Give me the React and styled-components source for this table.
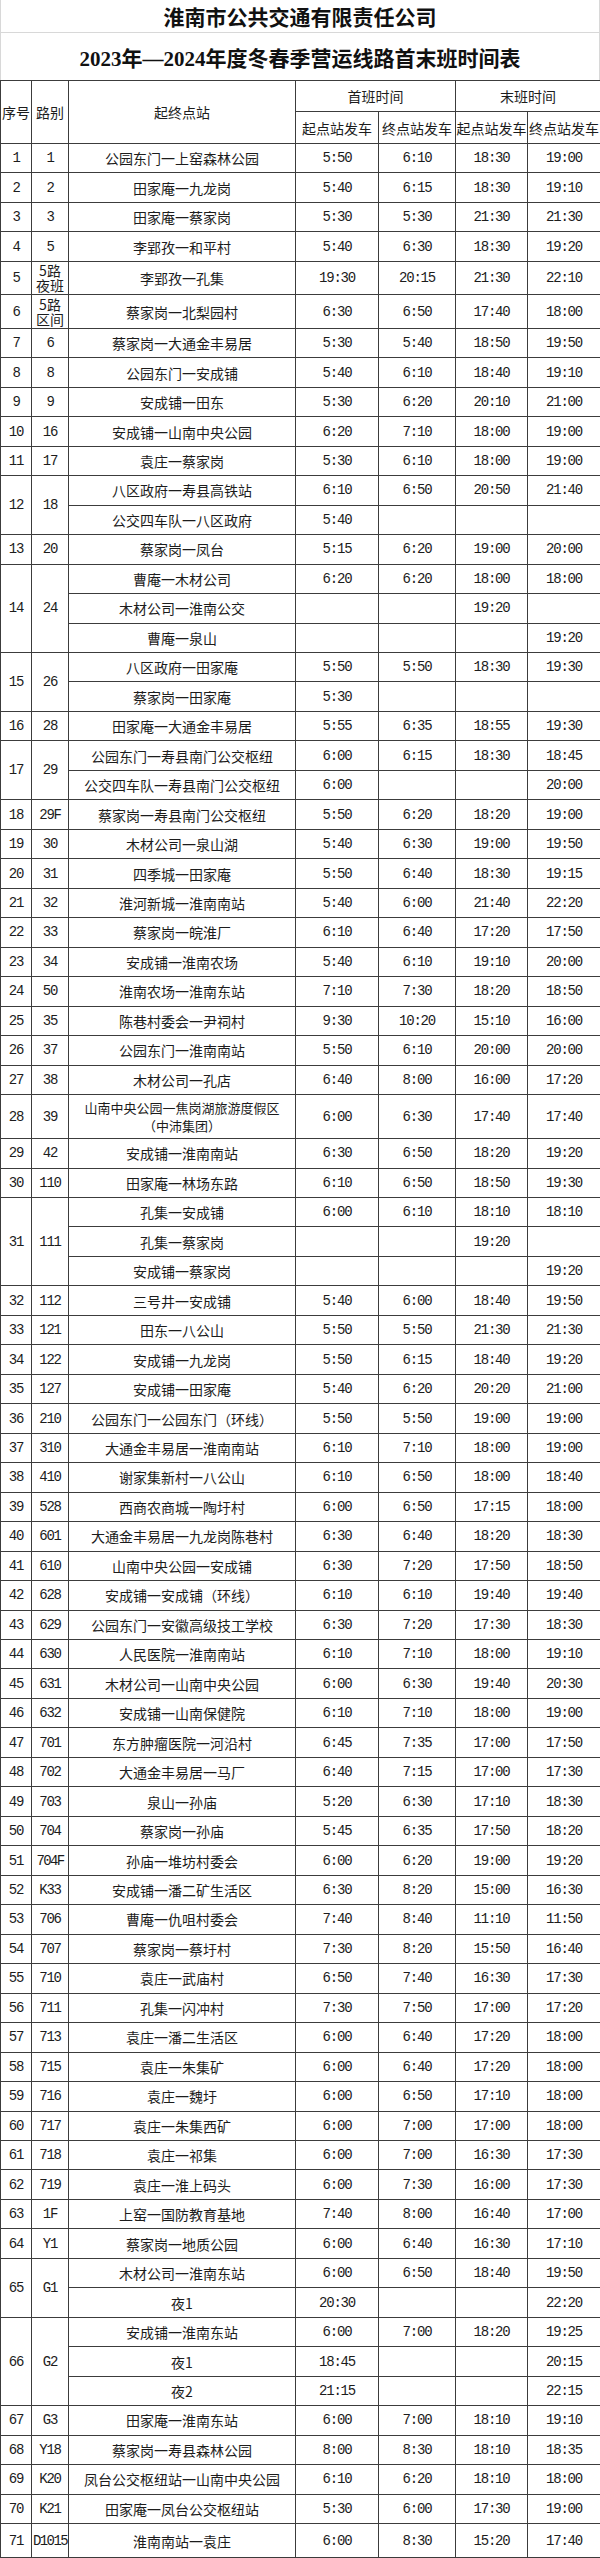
import React from "react";
import styled, { createGlobalStyle, css } from "styled-components";

const GlobalStyle = createGlobalStyle`
  body {
    margin: 0;
    background: #fff;
  }
`;

const CJK = `"Noto Sans CJK SC", sans-serif`;
const DIGITS = `"Liberation Mono", "Noto Sans CJK SC", monospace`;
const ROW_H = 29.47;

const Sheet = styled.div`
  width: 600px;
  color: #1c1c1c;
  font-family: ${CJK};
`;

const TitleBar = styled.div`
  height: ${props => props.$h}px;
  box-sizing: border-box;
  display: flex;
  align-items: center;
  justify-content: center;
  border-left: 1px solid #d8d8d8;
  border-right: 1px solid #d8d8d8;
  border-bottom: ${props => (props.$rule ? "1px solid #d8d8d8" : "none")};
  font-family: "Liberation Serif", "Noto Sans CJK SC", serif;
  font-weight: bold;
  font-size: 21px;
  color: #111;
`;

const Grid = styled.table`
  width: 600px;
  border-collapse: collapse;
  table-layout: fixed;
`;

const Row = styled.tr`
  height: ${props => props.$h}px;
`;

const cellBase = css`
  border: 1px solid #3c3c3c;
  padding: 0;
  text-align: center;
  vertical-align: middle;
  white-space: pre-line;
  overflow: hidden;
  font-weight: normal;
  font-family: ${props => (props.$digits ? DIGITS : CJK)};
  font-size: ${props => (props.$small ? 13 : 14)}px;
  letter-spacing: ${props =>
    props.$digits ? (props.$squeeze ? "-1.6px" : "-1.2px") : "0"};
  line-height: ${props => props.$lh || 18}px;
`;

const HeadCell = styled.th`
  ${cellBase};
`;

const Cell = styled.td`
  ${cellBase};
`;

const widths = [31, 37, 227, 83, 77, 72, 73];

const routes = [
  { n: 1, r: "1", subs: [["公园东门一上窑森林公园", "5:50", "6:10", "18:30", "19:00"]] },
  { n: 2, r: "2", subs: [["田家庵一九龙岗", "5:40", "6:15", "18:30", "19:10"]] },
  { n: 3, r: "3", subs: [["田家庵一蔡家岗", "5:30", "5:30", "21:30", "21:30"]] },
  { n: 4, r: "5", subs: [["李郢孜一和平村", "5:40", "6:30", "18:30", "19:20"]] },
  { n: 5, r: "5路\n夜班", h: 33.3, subs: [["李郢孜一孔集", "19:30", "20:15", "21:30", "22:10"]] },
  { n: 6, r: "5路\n区间", h: 33.7, subs: [["蔡家岗一北梨园村", "6:30", "6:50", "17:40", "18:00"]] },
  { n: 7, r: "6", subs: [["蔡家岗一大通金丰易居", "5:30", "5:40", "18:50", "19:50"]] },
  { n: 8, r: "8", subs: [["公园东门一安成铺", "5:40", "6:10", "18:40", "19:10"]] },
  { n: 9, r: "9", subs: [["安成铺一田东", "5:30", "6:20", "20:10", "21:00"]] },
  { n: 10, r: "16", subs: [["安成铺一山南中央公园", "6:20", "7:10", "18:00", "19:00"]] },
  { n: 11, r: "17", subs: [["袁庄一蔡家岗", "5:30", "6:10", "18:00", "19:00"]] },
  {
    n: 12,
    r: "18",
    subs: [
      ["八区政府一寿县高铁站", "6:10", "6:50", "20:50", "21:40"],
      ["公交四车队一八区政府", "5:40", "", "", ""]
    ]
  },
  { n: 13, r: "20", subs: [["蔡家岗一凤台", "5:15", "6:20", "19:00", "20:00"]] },
  {
    n: 14,
    r: "24",
    subs: [
      ["曹庵一木材公司", "6:20", "6:20", "18:00", "18:00"],
      ["木材公司一淮南公交", "", "", "19:20", ""],
      ["曹庵一泉山", "", "", "", "19:20"]
    ]
  },
  {
    n: 15,
    r: "26",
    subs: [
      ["八区政府一田家庵", "5:50", "5:50", "18:30", "19:30"],
      ["蔡家岗一田家庵", "5:30", "", "", ""]
    ]
  },
  { n: 16, r: "28", subs: [["田家庵一大通金丰易居", "5:55", "6:35", "18:55", "19:30"]] },
  {
    n: 17,
    r: "29",
    subs: [
      ["公园东门一寿县南门公交枢纽", "6:00", "6:15", "18:30", "18:45"],
      ["公交四车队一寿县南门公交枢纽", "6:00", "", "", "20:00"]
    ]
  },
  { n: 18, r: "29F", subs: [["蔡家岗一寿县南门公交枢纽", "5:50", "6:20", "18:20", "19:00"]] },
  { n: 19, r: "30", subs: [["木材公司一泉山湖", "5:40", "6:30", "19:00", "19:50"]] },
  { n: 20, r: "31", subs: [["四季城一田家庵", "5:50", "6:40", "18:30", "19:15"]] },
  { n: 21, r: "32", subs: [["淮河新城一淮南南站", "5:40", "6:00", "21:40", "22:20"]] },
  { n: 22, r: "33", subs: [["蔡家岗一皖淮厂", "6:10", "6:40", "17:20", "17:50"]] },
  { n: 23, r: "34", subs: [["安成铺一淮南农场", "5:40", "6:10", "19:10", "20:00"]] },
  { n: 24, r: "50", subs: [["淮南农场一淮南东站", "7:10", "7:30", "18:20", "18:50"]] },
  { n: 25, r: "35", subs: [["陈巷村委会一尹祠村", "9:30", "10:20", "15:10", "16:00"]] },
  { n: 26, r: "37", subs: [["公园东门一淮南南站", "5:50", "6:10", "20:00", "20:00"]] },
  { n: 27, r: "38", subs: [["木材公司一孔店", "6:40", "8:00", "16:00", "17:20"]] },
  {
    n: 28,
    r: "39",
    h: 44,
    subs: [["山南中央公园一焦岗湖旅游度假区\n（中沛集团）", "6:00", "6:30", "17:40", "17:40"]]
  },
  { n: 29, r: "42", subs: [["安成铺一淮南南站", "6:30", "6:50", "18:20", "19:20"]] },
  { n: 30, r: "110", subs: [["田家庵一林场东路", "6:10", "6:50", "18:50", "19:30"]] },
  {
    n: 31,
    r: "111",
    subs: [
      ["孔集一安成铺", "6:00", "6:10", "18:10", "18:10"],
      ["孔集一蔡家岗", "", "", "19:20", ""],
      ["安成铺一蔡家岗", "", "", "", "19:20"]
    ]
  },
  { n: 32, r: "112", subs: [["三号井一安成铺", "5:40", "6:00", "18:40", "19:50"]] },
  { n: 33, r: "121", subs: [["田东一八公山", "5:50", "5:50", "21:30", "21:30"]] },
  { n: 34, r: "122", subs: [["安成铺一九龙岗", "5:50", "6:15", "18:40", "19:20"]] },
  { n: 35, r: "127", subs: [["安成铺一田家庵", "5:40", "6:20", "20:20", "21:00"]] },
  { n: 36, r: "210", subs: [["公园东门一公园东门（环线）", "5:50", "5:50", "19:00", "19:00"]] },
  { n: 37, r: "310", subs: [["大通金丰易居一淮南南站", "6:10", "7:10", "18:00", "19:00"]] },
  { n: 38, r: "410", subs: [["谢家集新村一八公山", "6:10", "6:50", "18:00", "18:40"]] },
  { n: 39, r: "528", subs: [["西商农商城一陶圩村", "6:00", "6:50", "17:15", "18:00"]] },
  { n: 40, r: "601", subs: [["大通金丰易居一九龙岗陈巷村", "6:30", "6:40", "18:20", "18:30"]] },
  { n: 41, r: "610", subs: [["山南中央公园一安成铺", "6:30", "7:20", "17:50", "18:50"]] },
  { n: 42, r: "628", subs: [["安成铺一安成铺（环线）", "6:10", "6:10", "19:40", "19:40"]] },
  { n: 43, r: "629", subs: [["公园东门一安徽高级技工学校", "6:30", "7:20", "17:30", "18:30"]] },
  { n: 44, r: "630", subs: [["人民医院一淮南南站", "6:10", "7:10", "18:00", "19:10"]] },
  { n: 45, r: "631", subs: [["木材公司一山南中央公园", "6:00", "6:30", "19:40", "20:30"]] },
  { n: 46, r: "632", subs: [["安成铺一山南保健院", "6:10", "7:10", "18:00", "19:00"]] },
  { n: 47, r: "701", subs: [["东方肿瘤医院一河沿村", "6:45", "7:35", "17:00", "17:50"]] },
  { n: 48, r: "702", subs: [["大通金丰易居一马厂", "6:40", "7:15", "17:00", "17:30"]] },
  { n: 49, r: "703", subs: [["泉山一孙庙", "5:20", "6:30", "17:10", "18:30"]] },
  { n: 50, r: "704", subs: [["蔡家岗一孙庙", "5:45", "6:35", "17:50", "18:20"]] },
  { n: 51, r: "704F", subs: [["孙庙一堆坊村委会", "6:00", "6:20", "19:00", "19:20"]] },
  { n: 52, r: "K33", subs: [["安成铺一潘二矿生活区", "6:30", "8:20", "15:00", "16:30"]] },
  { n: 53, r: "706", subs: [["曹庵一仇咀村委会", "7:40", "8:40", "11:10", "11:50"]] },
  { n: 54, r: "707", subs: [["蔡家岗一蔡圩村", "7:30", "8:20", "15:50", "16:40"]] },
  { n: 55, r: "710", subs: [["袁庄一武庙村", "6:50", "7:40", "16:30", "17:30"]] },
  { n: 56, r: "711", subs: [["孔集一闪冲村", "7:30", "7:50", "17:00", "17:20"]] },
  { n: 57, r: "713", subs: [["袁庄一潘二生活区", "6:00", "6:40", "17:20", "18:00"]] },
  { n: 58, r: "715", subs: [["袁庄一朱集矿", "6:00", "6:40", "17:20", "18:00"]] },
  { n: 59, r: "716", subs: [["袁庄一魏圩", "6:00", "6:50", "17:10", "18:00"]] },
  { n: 60, r: "717", subs: [["袁庄一朱集西矿", "6:00", "7:00", "17:00", "18:00"]] },
  { n: 61, r: "718", subs: [["袁庄一祁集", "6:00", "7:00", "16:30", "17:30"]] },
  { n: 62, r: "719", subs: [["袁庄一淮上码头", "6:00", "7:30", "16:00", "17:30"]] },
  { n: 63, r: "1F", subs: [["上窑一国防教育基地", "7:40", "8:00", "16:40", "17:00"]] },
  { n: 64, r: "Y1", subs: [["蔡家岗一地质公园", "6:00", "6:40", "16:30", "17:10"]] },
  {
    n: 65,
    r: "G1",
    subs: [
      ["木材公司一淮南东站", "6:00", "6:50", "18:40", "19:50"],
      ["夜1", "20:30", "", "", "22:20"]
    ]
  },
  {
    n: 66,
    r: "G2",
    subs: [
      ["安成铺一淮南东站", "6:00", "7:00", "18:20", "19:25"],
      ["夜1", "18:45", "", "", "20:15"],
      ["夜2", "21:15", "", "", "22:15"]
    ]
  },
  { n: 67, r: "G3", subs: [["田家庵一淮南东站", "6:00", "7:00", "18:10", "19:10"]] },
  { n: 68, r: "Y18", subs: [["蔡家岗一寿县森林公园", "8:00", "8:30", "18:10", "18:35"]] },
  { n: 69, r: "K20", subs: [["凤台公交枢纽站一山南中央公园", "6:10", "6:20", "18:10", "18:00"]] },
  { n: 70, r: "K21", subs: [["田家庵一凤台公交枢纽站", "5:30", "6:00", "17:30", "19:00"]] },
  { n: 71, r: "D1015", h: 34, subs: [["淮南南站一袁庄", "6:00", "8:30", "15:20", "17:40"]] }
];

const RouteRows = ({ route }) =>
  route.subs.map((sub, i) => {
    const isNamed = route.r.includes("路");
    return (
      <Row key={i} $h={route.h || ROW_H}>
        {i === 0 && (
          <Cell rowSpan={route.subs.length} $digits>
            {route.n}
          </Cell>
        )}
        {i === 0 && (
          <Cell
            rowSpan={route.subs.length}
            $digits={!isNamed}
            $squeeze={route.r.length > 3}
            $lh={isNamed ? 15 : 18}
          >
            {route.r}
          </Cell>
        )}
        <Cell $small={sub[0].includes("\n")}>{sub[0]}</Cell>
        {sub.slice(1).map((t, j) => (
          <Cell key={j} $digits>
            {t}
          </Cell>
        ))}
      </Row>
    );
  });

const App = () => (
  <Sheet>
    <GlobalStyle />
    <TitleBar $h={33} $rule>
      淮南市公共交通有限责任公司
    </TitleBar>
    <TitleBar $h={47}>2023年—2024年度冬春季营运线路首末班时间表</TitleBar>
    <Grid>
      <colgroup>
        {widths.map((w, i) => (
          <col key={i} style={{ width: w }} />
        ))}
      </colgroup>
      <thead>
        <Row $h={31}>
          <HeadCell rowSpan={2}>序号</HeadCell>
          <HeadCell rowSpan={2}>路别</HeadCell>
          <HeadCell rowSpan={2}>起终点站</HeadCell>
          <HeadCell colSpan={2}>首班时间</HeadCell>
          <HeadCell colSpan={2}>末班时间</HeadCell>
        </Row>
        <Row $h={32}>
          <HeadCell>起点站发车</HeadCell>
          <HeadCell>终点站发车</HeadCell>
          <HeadCell>起点站发车</HeadCell>
          <HeadCell>终点站发车</HeadCell>
        </Row>
      </thead>
      <tbody>
        {routes.map(route => (
          <RouteRows key={route.n} route={route} />
        ))}
      </tbody>
    </Grid>
  </Sheet>
);

export default App;
